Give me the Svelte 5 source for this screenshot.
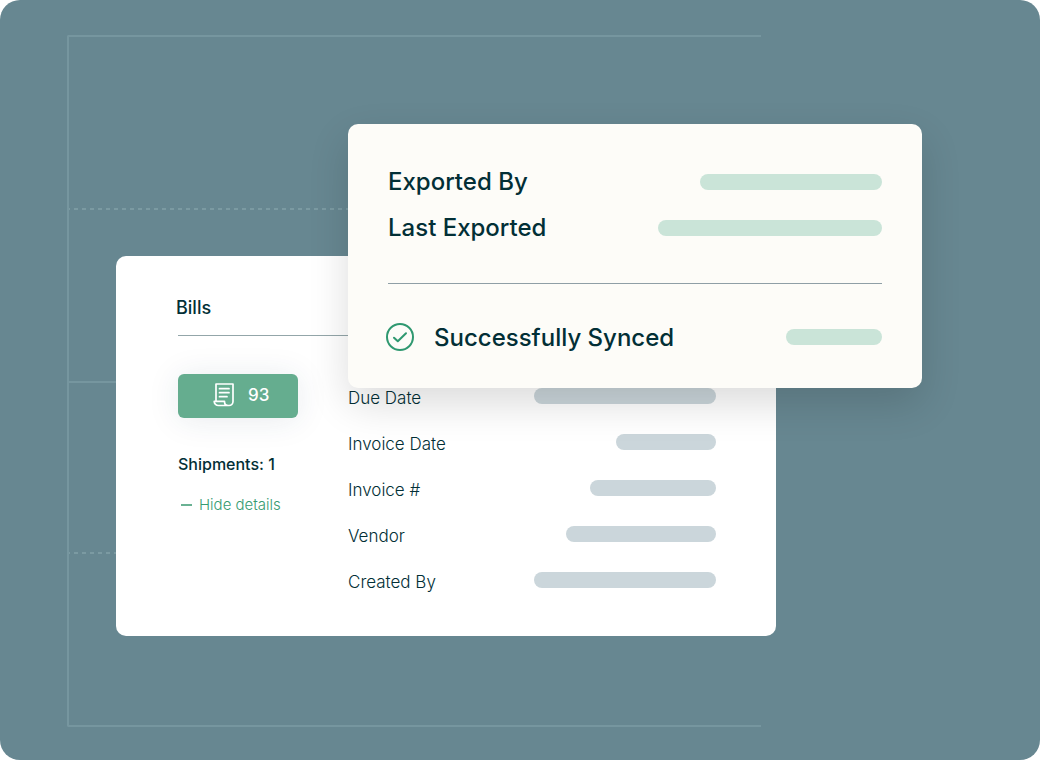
<script lang="ts">
  // Bills panel with the export status card laid over its top right corner.
  // Values are skeleton bars, so each row only carries a label and a bar width.

  interface Row {
    label: string;
    width: number;
  }

  const exportRows: Row[] = [
    { label: "Exported By", width: 182 },
    { label: "Last Exported", width: 224 },
  ];

  const billRows: Row[] = [
    { label: "Due Date", width: 182 },
    { label: "Invoice Date", width: 100 },
    { label: "Invoice #", width: 126 },
    { label: "Vendor", width: 150 },
    { label: "Created By", width: 182 },
  ];

  const billCount = 93;
  const shipments = 1;
</script>

<main class="stage">
  <div class="frame" aria-hidden="true">
    <div class="band">
      <svg class="dashes"><line x1="0" y1="1" x2="100%" y2="1" /></svg>
    </div>
    <div class="band solid"></div>
    <div class="band">
      <svg class="dashes"><line x1="0" y1="1" x2="100%" y2="1" /></svg>
    </div>
    <div class="band"></div>
  </div>

  <div class="cards">
    <section class="card bills">
      <h2>Bills</h2>
      <div class="body">
        <div class="summary">
          <button type="button" class="count">
            <svg width="24" height="24" viewBox="0 0 24 24" aria-hidden="true">
              <path d="M4 18V1h17v17.5a4 4 0 0 1-4 4H6.5A4.2 4.2 0 0 1 2.2 18.4H12.5c0 2.5 1.6 4.1 4 4.1" />
              <path d="M7.5 5.7H17M7.5 9.7H17M7.5 13.7H15" />
            </svg>
            <span>{billCount}</span>
          </button>
          <p class="shipments">Shipments: {shipments}</p>
          <button type="button" class="toggle">
            <span class="minus" aria-hidden="true"></span>
            Hide details
          </button>
        </div>

        <dl class="details">
          {#each billRows as row (row.label)}
            <div class="row">
              <dt>{row.label}</dt>
              <dd class="bar" style="width: {row.width}px;"></dd>
            </div>
          {/each}
        </dl>
      </div>
    </section>

    <section class="card export">
      <dl class="meta">
        {#each exportRows as row (row.label)}
          <div class="row">
            <dt>{row.label}</dt>
            <dd class="bar" style="width: {row.width}px;"></dd>
          </div>
        {/each}
      </dl>
      <div class="row status">
        <svg class="check" width="24" height="24" viewBox="0 0 24 24" aria-hidden="true">
          <circle cx="12" cy="12" r="13" />
          <path d="M6 12.7l3.8 3.6 8.2-8" />
        </svg>
        <span>Successfully Synced</span>
        <div class="bar" style="width: 96px;"></div>
      </div>
    </section>
  </div>
</main>

<style>
  :global(body) {
    margin: 0;
    background: #fff;
  }
  .stage {
    display: grid;
    box-sizing: border-box;
    min-height: 100vh;
    background: #678791;
    border-radius: 20px;
    color: #022f36;
    font-family: Inter, "Liberation Sans", sans-serif;
  }

  /* backdrop lines, sharing the single grid cell with the cards */
  .frame {
    grid-area: 1 / 1;
    display: flex;
    flex-direction: column;
    margin: 35px 279px 33px 67px;
    padding-top: 2px;
    border: 2px solid #76969f;
    border-right: 0;
    border-radius: 2px 0 0 2px;
  }
  .band {
    flex: 1;
    display: flex;
    align-items: flex-end;
  }
  .band.solid {
    border-bottom: 2px solid #76969f;
  }
  .dashes {
    display: block;
    width: 100%;
    height: 2px;
  }
  .dashes line {
    stroke: #7b9aa2;
    stroke-width: 2;
    stroke-dasharray: 4 4;
    stroke-dashoffset: 3;
  }

  .cards {
    grid-area: 1 / 1;
    display: grid;
    grid-template-columns: 232px 1fr 146px;
    grid-template-rows: 132px 132px auto;
    align-self: center;
    margin: 0 118px 0 116px;
  }
  .card {
    border-radius: 10px;
  }
  .bills {
    grid-area: 2 / 1 / 4 / 3;
    padding: 40px 60px 34px;
    background: #fff;
  }
  .export {
    grid-area: 1 / 2 / 3 / 4;
    padding: 35px 40px 28px;
    background: #fdfcf8;
    box-shadow: 0 16px 40px rgba(0, 0, 0, 0.14);
    font-size: 24px;
    font-weight: 500;
  }

  h2 {
    margin: 0;
    font-size: 18px;
    font-weight: 500;
    line-height: 24px;
  }
  .body {
    display: flex;
    gap: 50px;
    margin: 15px 0 0 2px;
    padding-top: 38px;
    border-top: 1px solid #93a6a9;
  }
  .summary {
    width: 120px;
  }
  dl,
  dd,
  p {
    margin: 0;
  }
  button {
    border: 0;
    font-family: inherit;
    cursor: pointer;
  }
  .count {
    display: flex;
    align-items: center;
    gap: 12px;
    width: 100%;
    height: 44px;
    padding: 0 28px 2px 34px;
    border-radius: 6px;
    background: #65ad8f;
    box-shadow: 0 2px 32px rgba(30, 60, 90, 0.1);
    color: #fff;
    font-size: 17px;
    font-weight: 500;
  }
  .count svg {
    flex: none;
    fill: none;
    stroke: #fff;
    stroke-width: 1.7;
    stroke-linejoin: round;
    stroke-linecap: round;
  }
  .shipments {
    margin-top: 34px;
    font-size: 16px;
    font-weight: 500;
    line-height: 24px;
    white-space: nowrap;
  }
  .toggle {
    display: flex;
    align-items: center;
    gap: 7px;
    margin-top: 17px;
    padding: 0 0 0 3px;
    background: none;
    color: #369b71;
    font-size: 15px;
    font-weight: 300;
    line-height: 24px;
    white-space: nowrap;
  }
  .minus {
    width: 11px;
    height: 2px;
    background: #6ab293;
  }

  .row {
    display: flex;
    align-items: center;
    justify-content: space-between;
    height: 46px;
  }
  .bar {
    height: 16px;
    border-radius: 8px;
  }
  .details {
    flex: 1;
    display: flex;
    flex-direction: column;
    gap: 2px;
    font-size: 17px;
    font-weight: 300;
  }
  .details .row {
    height: 44px;
  }
  .details dt {
    padding-top: 3px;
  }
  .details .bar {
    background: #cbd6db;
  }
  .meta dt {
    padding-bottom: 2px;
  }
  .export .bar {
    background: #cae4d8;
  }
  .status {
    gap: 22px;
    margin-top: 32px;
    padding-top: 30px;
    border-top: 1px solid #8f9fa6;
  }
  .status .bar {
    margin-left: auto;
  }
  .check {
    overflow: visible;
    fill: none;
    stroke: #2f9870;
    stroke-width: 2;
    stroke-linecap: round;
    stroke-linejoin: round;
  }
</style>
